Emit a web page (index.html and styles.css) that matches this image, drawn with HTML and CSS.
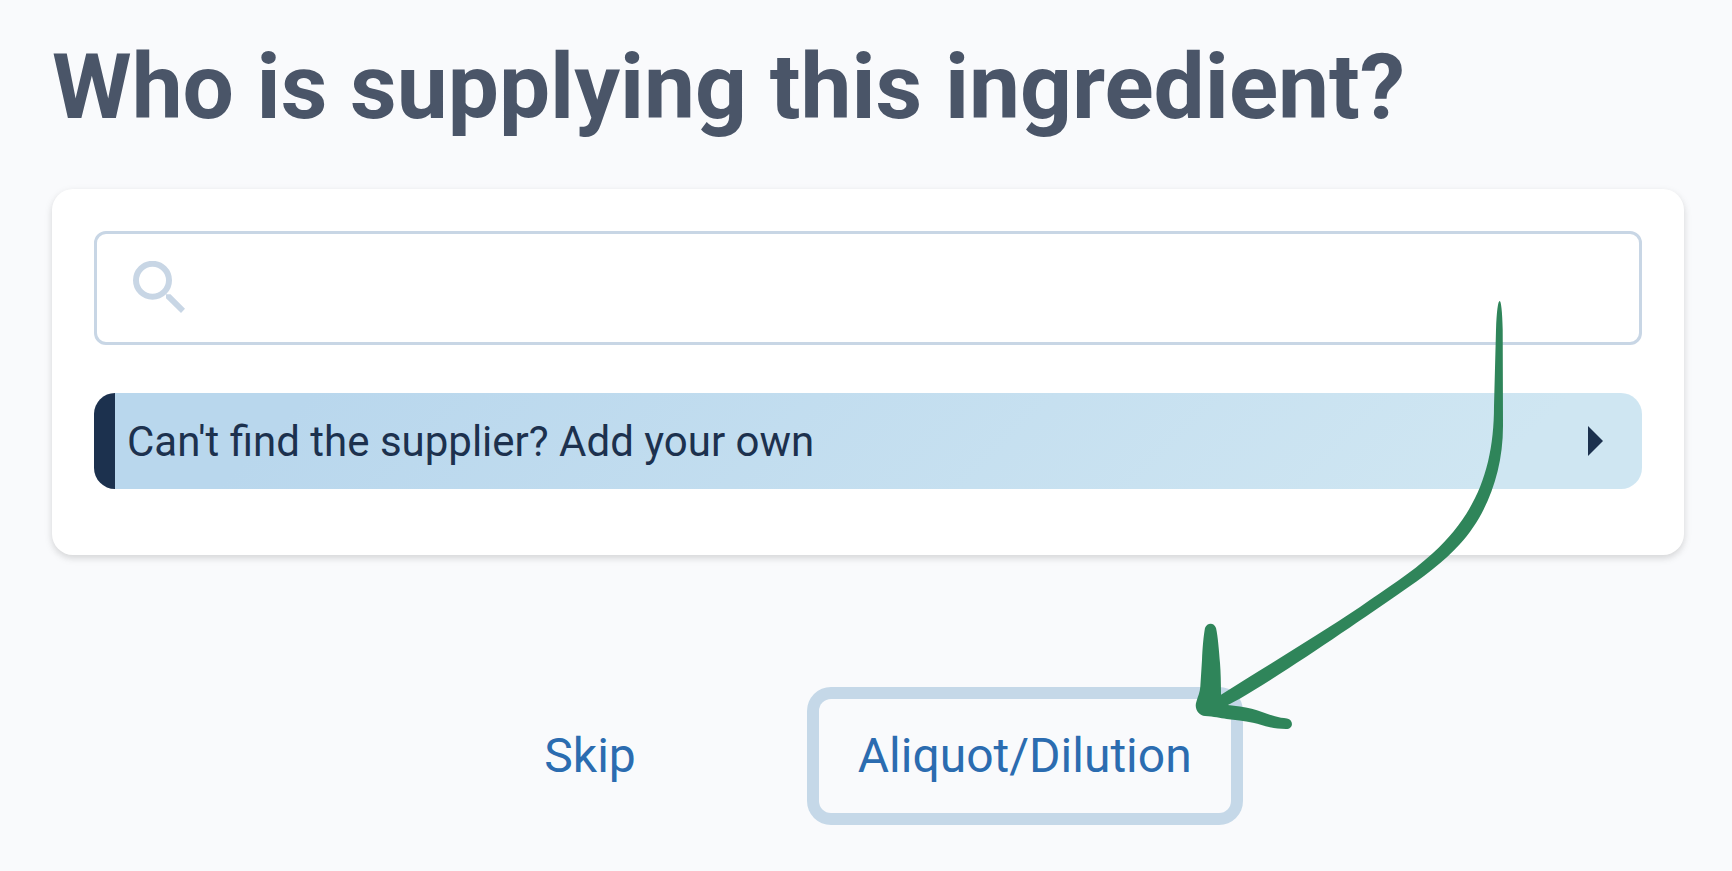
FILE: index.html
```html
<!DOCTYPE html>
<html lang="en">
<head>
    <meta charset="UTF-8">
    <title>Ingredient supplier</title>
    <link rel="stylesheet" href="styles.css">
</head>
<body>

<main class="page">
    <h1>Who is supplying this ingredient?</h1>

    <div class="card">
        <div class="search">
            <svg class="search-icon" viewBox="0 0 54 54" aria-hidden="true">
                <circle cx="20.5" cy="19.3" r="16.5" fill="none" stroke="currentColor" stroke-width="6"/>
                <path d="M34 33.3h4.5L53 47.7 49 52 34 37.2z" fill="currentColor"/>
            </svg>
            <input type="text" id="supplier" aria-label="Search suppliers">
        </div>

        <button class="add-own" type="button">
            <span>Can't find the supplier? Add your own</span>
            <svg class="caret" viewBox="0 0 15 30" aria-hidden="true">
                <path d="M0 0l15 15L0 30z" fill="currentColor"/>
            </svg>
        </button>
    </div>

    <div class="actions">
        <button class="action" type="button">Skip</button>
        <div class="highlight">
            <button class="action focused" type="button">Aliquot/Dilution</button>
            <!-- hand drawn arrow pointing to the button -->
            <svg class="arrow" viewBox="0 0 320 440" aria-hidden="true">
                <path d="M309.7 5C311 5 312.3 15 312.7 34L313 130C313 180 294 222 270 248C255 265 232 282 210 297C175 321 115 363 63 394.7C54 400 46 405 38 409C46 410 54 411 61.7 412.7C70 415 77 418 85 420.3C89 421.6 93 422 97 422.5C104 424 103.5 433 96 433C90 433 85 432.5 80 431.3C74 430 69 428 63 426.7C54 425 45 424 36.7 423C30 422 24 420.5 15 420C9 419.5 4 413 6.3 406C8 400 10 396 10.3 390.7L12 364C12.5 352 13.5 340 15 332C17 326.5 24 326 26 332C28 341 29 355 30 367C30.7 376 31 386 31 398.7C75 371 125 341 170 311C197 292 220 278 243 257C287 217 304 170 304 110L306 34C306.7 15 308 5 309.7 5z" fill="#2f855a"/>
            </svg>
        </div>
    </div>
</main>

</body>
</html>
```
FILE: styles.css
```css
* {
    box-sizing: border-box;
}
body {
    margin: 0;
    background-color: #f9fafc;
    font-family: Roboto, "Liberation Sans", sans-serif;
}
button, input {
    font: inherit;
    color: inherit;
}
button {
    border: none;
    background: none;
    cursor: pointer;
}
.page {
    padding: 32px 48px 32px 52px;
}
h1 {
    margin: 0 0 47px;
    font-size: 91px;
    line-height: 110px;
    font-weight: 700;
    color: #4a5568;
}
.card {
    padding: 42px 42px 66px;
    border-radius: 21px;
    background-color: #fff;
    box-shadow: 0 3px 9px rgba(0, 0, 0, .1), 0 3px 6px rgba(0, 0, 0, .06);
}
.search {
    display: flex;
    align-items: center;
    gap: 16px;
    height: 114px;
    margin-bottom: 48px;
    padding: 0 36px 0 35px;
    border: 3px solid #c8d6e5;
    border-radius: 12px;
}
.search-icon {
    flex: none;
    width: 54px;
    height: 54px;
    color: #c8d6e5;
}
.search input {
    flex: 1;
    min-width: 0;
    padding: 0;
    border: none;
    outline: none;
    background: none;
    font-size: 42px;
}
.add-own {
    display: flex;
    align-items: center;
    justify-content: space-between;
    width: 100%;
    min-height: 96px;
    padding: 0 39px 0 12px;
    border-left: 21px solid #1c314e;
    border-radius: 21px;
    background: linear-gradient(135deg, #b9d7ed 12%, #cfe6f2 90%);
    color: #1c314e;
    font-size: 42px;
    text-align: left;
}
.caret {
    flex: none;
    width: 15px;
    height: 30px;
}
.actions {
    display: flex;
    justify-content: center;
    gap: 144px;
    margin-top: 144px;
}
.action {
    padding: 21px 39px;
    border-radius: 12px;
    color: #2b6cb0;
    font-size: 48px;
    line-height: 72px;
}
.focused {
    box-shadow: 0 0 0 12px #c5d8e8;
}
.highlight {
    position: relative;
}
.arrow {
    position: absolute;
    top: -403px;
    left: calc(100% - 41px);
    width: 320px;
    height: 440px;
    pointer-events: none;
}
```
